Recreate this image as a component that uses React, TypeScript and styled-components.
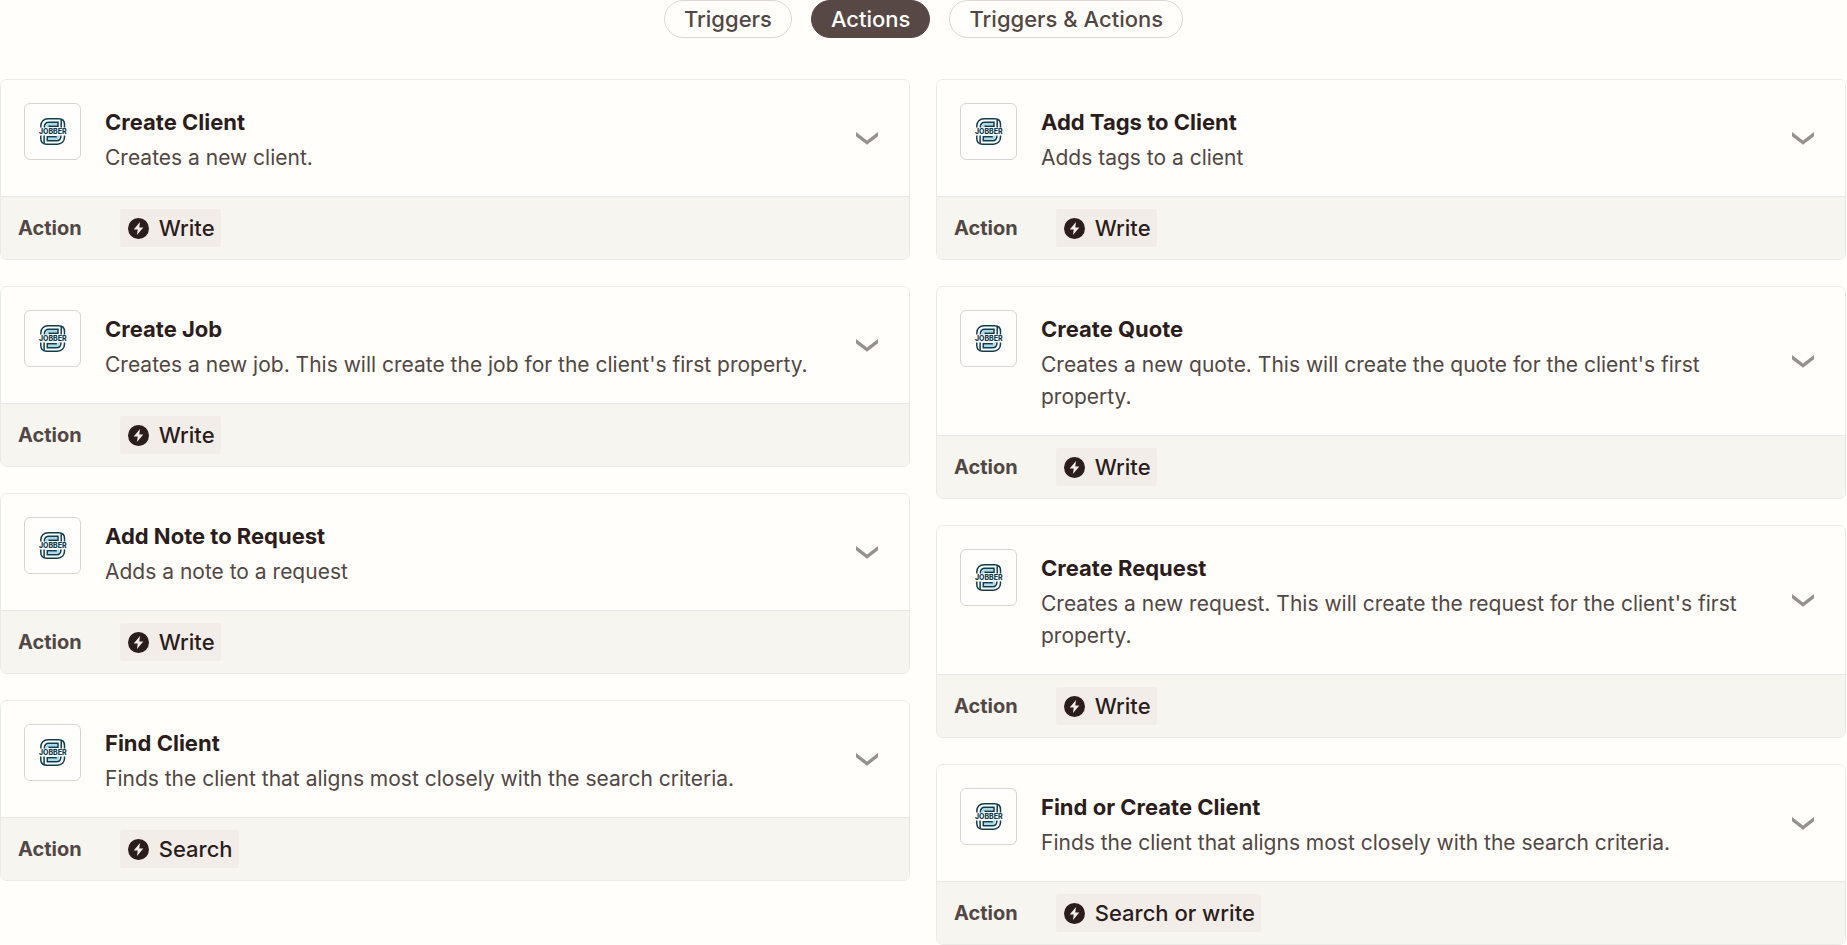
import React, { useState } from "react";
import styled, { createGlobalStyle } from "styled-components";

const GlobalStyle = createGlobalStyle`
  *, *::before, *::after { box-sizing: border-box; }
  body {
    margin: 0;
    background: #fffefb;
    color: #2b1d1c;
    font-family: Inter, "Liberation Sans", sans-serif;
    -webkit-font-smoothing: antialiased;
  }
  button { font: inherit; cursor: pointer; }
`;

const Page = styled.main`
  display: flex;
  flex-direction: column;
  gap: 41px;
`;

const Filters = styled.div`
  display: flex;
  justify-content: center;
  gap: 19px;
`;

const Pill = styled.button<{ $active: boolean }>`
  height: 38px;
  padding: 0 19px;
  border: 1px solid ${(p) => (p.$active ? "#574846" : "#dbd8d4")};
  border-radius: 19px;
  background: ${(p) => (p.$active ? "#574846" : "#fffefb")};
  color: ${(p) => (p.$active ? "#fffefb" : "#524744")};
  font-size: 22px;
  font-weight: 500;
  line-height: 32px;
`;

const Columns = styled.div`
  display: grid;
  grid-template-columns: repeat(2, minmax(0, 1fr));
  align-items: start;
  gap: 26px;
  padding-right: 1px;
`;

const Column = styled.ul`
  display: flex;
  flex-direction: column;
  gap: 26px;
  margin: 0;
  padding: 0;
  list-style: none;
`;

const Card = styled.li`
  border: 1px solid #ebeae7;
  border-radius: 7px;
  overflow: hidden;
`;

const CardHeader = styled.button`
  display: flex;
  width: 100%;
  gap: 24px;
  padding: 23px 31px 22px 23px;
  border: 0;
  background: #fffefb;
  color: inherit;
  text-align: left;
`;

const LogoBox = styled.span`
  display: flex;
  flex: none;
  align-items: center;
  justify-content: center;
  width: 57px;
  height: 57px;
  border: 1px solid #d7d5d2;
  border-radius: 6px;
  background: #fffefd;
`;

const CardText = styled.span`
  display: flex;
  flex: 1;
  flex-direction: column;
  gap: 3px;
  min-width: 0;
  padding-top: 2px;
`;

const Title = styled.span`
  font-size: 22px;
  font-weight: 700;
  line-height: 34px;
`;

const Description = styled.span`
  color: #524744;
  font-size: 21px;
  line-height: 32px;
`;

const Chevron = styled.svg`
  flex: none;
  align-self: center;
`;

const CardFooter = styled.div`
  display: flex;
  align-items: center;
  gap: 38px;
  padding: 12px 17px;
  border-top: 1px solid #e8e7e3;
  background: #f6f5ef;
`;

const Kind = styled.span`
  color: #524744;
  font-size: 20px;
  font-weight: 700;
  line-height: 32px;
`;

const Tag = styled.span`
  display: flex;
  align-items: center;
  gap: 10px;
  height: 38px;
  padding: 0 6px 0 8px;
  border-radius: 3px;
  background: #f2ede8;
  font-size: 22px;
  font-weight: 500;
`;

function LogoHalf() {
  return (
    <>
      <path d="M7.5 10.5C7.5 8 9 6 11.5 6H19.5V8.5H12.5L9.5 10.5Z" fill="#a9dbe8" />
      <g fill="none" stroke="#103d50" strokeWidth="1.5">
        <path d="M2.8 10.5V9C2.8 4.5 5.8 1.8 10 1.8H20.5C24.3 1.8 26.5 4 26.5 7.5V10.5" />
        <path d="M6.4 10.5V10C6.4 6.8 8.2 5.2 11 5.2H20V9.3H10.5" />
        <path d="M23.2 10.5V2.2" />
      </g>
    </>
  );
}

function JobberLogo() {
  return (
    <svg width="31" height="29" viewBox="-1 0 31 29" aria-hidden="true">
      <LogoHalf />
      <g transform="rotate(180 14.65 14.5)">
        <LogoHalf />
      </g>
      <text x="14.8" y="17" textAnchor="middle" fill="#103d50" fontFamily="Inter, sans-serif" fontSize="7" fontWeight="800">
        JOBBER
      </text>
    </svg>
  );
}

function BoltIcon() {
  return (
    <svg width="21" height="21" viewBox="0 0 21 21" aria-hidden="true">
      <circle cx="10.5" cy="10.5" r="10.5" fill="#2b1d1c" />
      <path d="M12 4L5.7 11.6H9.7L9 17L15.3 9.4H11.3Z" fill="#f2ede8" />
    </svg>
  );
}

type Item = { title: string; description: string; tag: string };

const left: Item[] = [
  { title: "Create Client", description: "Creates a new client.", tag: "Write" },
  { title: "Create Job", description: "Creates a new job. This will create the job for the client's first property.", tag: "Write" },
  { title: "Add Note to Request", description: "Adds a note to a request", tag: "Write" },
  { title: "Find Client", description: "Finds the client that aligns most closely with the search criteria.", tag: "Search" },
];

const right: Item[] = [
  { title: "Add Tags to Client", description: "Adds tags to a client", tag: "Write" },
  { title: "Create Quote", description: "Creates a new quote. This will create the quote for the client's first property.", tag: "Write" },
  { title: "Create Request", description: "Creates a new request. This will create the request for the client's first property.", tag: "Write" },
  { title: "Find or Create Client", description: "Finds the client that aligns most closely with the search criteria.", tag: "Search or write" },
];

const filters = ["Triggers", "Actions", "Triggers & Actions"];

function ActionCard({ item }: { item: Item }) {
  return (
    <Card>
      <CardHeader type="button">
        <LogoBox>
          <JobberLogo />
        </LogoBox>
        <CardText>
          <Title>{item.title}</Title>
          <Description>{item.description}</Description>
        </CardText>
        <Chevron width="22" height="14" viewBox="0 0 22 14" aria-hidden="true">
          <path d="M0 0L11 8.5L22 0V4.3L11 12.8L0 4.3Z" fill="#95918f" />
        </Chevron>
      </CardHeader>
      <CardFooter>
        <Kind>Action</Kind>
        <Tag>
          <BoltIcon />
          {item.tag}
        </Tag>
      </CardFooter>
    </Card>
  );
}

export default function App() {
  const [active, setActive] = useState("Actions");
  return (
    <Page>
      <GlobalStyle />
      <Filters>
        {filters.map((name) => (
          <Pill key={name} type="button" $active={name === active} aria-pressed={name === active} onClick={() => setActive(name)}>
            {name}
          </Pill>
        ))}
      </Filters>
      <Columns>
        {[left, right].map((items, i) => (
          <Column key={i}>
            {items.map((item) => (
              <ActionCard key={item.title} item={item} />
            ))}
          </Column>
        ))}
      </Columns>
    </Page>
  );
}
